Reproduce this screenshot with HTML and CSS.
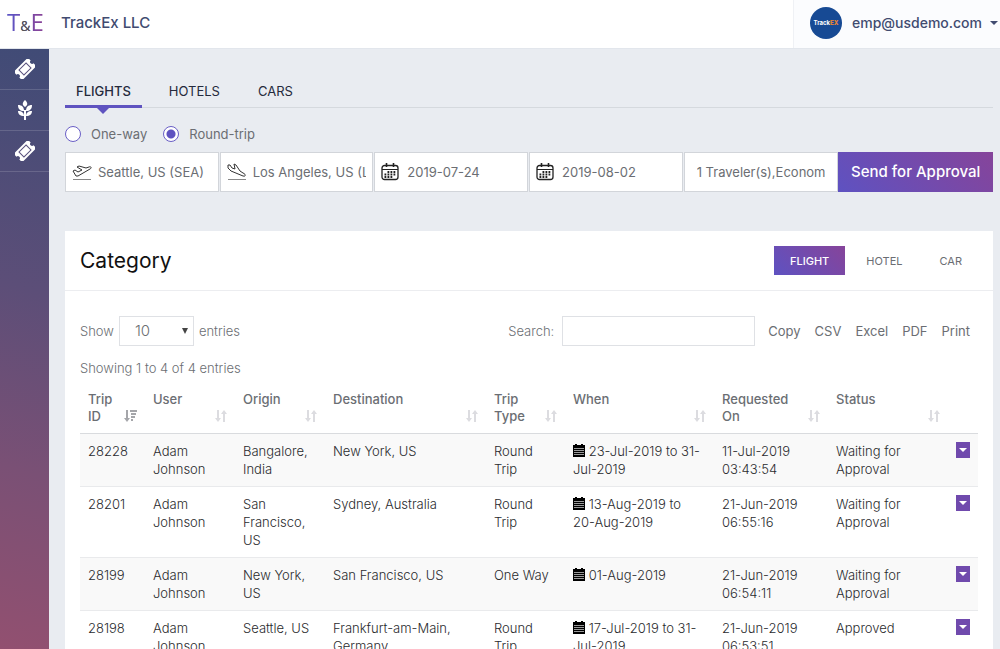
FILE: index.html
```
<!DOCTYPE html>
<html lang="en">
<head>
    <meta charset="UTF-8">
    <meta name="viewport" content="width=device-width, initial-scale=1.0">
    <title>TrackEx LLC - Flights</title>
    <link rel="stylesheet" href="styles.css">
</head>
<body>

<!-- shared icons -->
<svg class="sprite" width="0" height="0" aria-hidden="true">
    <symbol id="ticket" viewBox="0 0 20 20">
        <g transform="rotate(-45 10 10)">
            <path fill="#fff" d="M0 4h20v4a2 2 0 0 0 0 4v4H0v-4a2 2 0 0 0 0-4z"/>
            <path fill="none" stroke="#59527d" d="M5 6.500h10v7H5z"/>
        </g>
    </symbol>
    <symbol id="leaf" viewBox="0 0 14 20">
        <path fill="#fff" d="M7 0c3 3 3 5 0 7-3-2-3-4 0-7zM0 5c4 0 6 2 6 6-4 0-6-2-6-6zM14 5c-4 0-6 2-6 6 4 0 6-2 6-6zM0 11c4 0 6 2 6 5-4 0-6-2-6-5zM14 11c-4 0-6 2-6 5 4 0 6-2 6-5zM6 10h2v10H6z"/>
    </symbol>
    <symbol id="calendar" viewBox="0 0 18 18">
        <g fill="none" stroke="#222">
            <rect x="1" y="2.500" width="16" height="14" rx="2.500" stroke-width="1.300"/>
            <path d="M1 6.500h16"/>
            <path stroke-width="1.600" d="M5.500 0v4M12.500 0v4"/>
            <path stroke-width="1.800" stroke-dasharray="1.800 1.200" d="M6.500 9h8M3.500 11.500h11M3.500 14h8"/>
        </g>
    </symbol>
    <symbol id="date" viewBox="0 0 12 13">
        <path d="M0 1h2V0h2v1h4V0h2v1h2v12H0z"/>
        <path stroke="#ddd" stroke-width=".7" d="M1 4.500h10M1 6.500h10M1 8.500h10M1 10.500h10"/>
    </symbol>
    <symbol id="sort" viewBox="0 0 12 12">
        <path d="M2 0h2v8h2l-3 4-3-4h2zM8 12h2V4h2L9 0 6 4h2z"/>
    </symbol>
    <symbol id="sort-desc" viewBox="0 0 13 12">
        <path d="M2 0h2v8h2l-3 4-3-4h2zM6 0h7v2H6zM7 3h5v2H7zM7 6h4v2H7zM7 9h2v2H7z"/>
    </symbol>
</svg>

<header class="topbar">
    <a class="logo" href="#">T<span>&amp;</span>E</a>
    <div class="company">TrackEx LLC</div>
    <button class="account" type="button">
        <span class="avatar">Track<b>EX</b></span>
        <span>emp@usdemo.com</span>
        <span class="caret"></span>
    </button>
</header>

<div class="layout">
    <nav class="sidebar">
        <a href="#" aria-label="Trips"><svg width="20" height="20"><use href="#ticket"/></svg></a>
        <a href="#" aria-label="Policies"><svg width="14" height="20"><use href="#leaf"/></svg></a>
        <a href="#" aria-label="Bookings"><svg width="20" height="20"><use href="#ticket"/></svg></a>
    </nav>

    <main class="content">
        <nav class="tabs">
            <a class="active" href="#">FLIGHTS</a>
            <a href="#">HOTELS</a>
            <a href="#">CARS</a>
        </nav>

        <form>
            <div class="trip_type">
                <input type="radio" name="trip" id="oneWay">
                <label for="oneWay">One-way</label>
                <input type="radio" name="trip" id="roundTrip" checked>
                <label for="roundTrip">Round-trip</label>
            </div>
            <div class="search_bar">
                <label class="field">
                    <svg width="20" height="18" viewBox="0 0 20 18" fill="none" stroke="#333">
                        <path d="M1 8l2-1 3 2 4-2-5-3 2-1 7 2 3-1c2-1 3 1 1 2L6 13H4z"/>
                        <path stroke="#888" d="M1 16.500h18"/>
                    </svg>
                    <input type="text" value="Seattle, US (SEA)" aria-label="From">
                </label>
                <label class="field">
                    <svg width="20" height="18" viewBox="0 0 20 18" fill="none" stroke="#333">
                        <path d="M1 2l2 0 2 3 3 1-1-5 2 1 4 6 3 2c3 1 3 4 0 3L4 8 1 5z"/>
                        <path stroke="#888" d="M1 16.500h18"/>
                    </svg>
                    <input type="text" value="Los Angeles, US (LAX)" aria-label="To">
                </label>
                <label class="field date">
                    <svg width="18" height="18"><use href="#calendar"/></svg>
                    <input type="text" value="2019-07-24" aria-label="Departure date">
                </label>
                <label class="field date">
                    <svg width="18" height="18"><use href="#calendar"/></svg>
                    <input type="text" value="2019-08-02" aria-label="Return date">
                </label>
                <label class="field travelers">
                    <input type="text" value="1 Traveler(s),Economy" aria-label="Travelers and class">
                </label>
                <button class="send" type="button">Send for Approval</button>
            </div>
        </form>

        <section class="card">
            <div class="card_head">
                <h1>Category</h1>
                <div class="pills">
                    <button class="active" type="button">FLIGHT</button>
                    <button type="button">HOTEL</button>
                    <button type="button">CAR</button>
                </div>
            </div>

            <div class="card_body">
                <div class="table_tools">
                    <label for="pageSize">Show</label>
                    <span class="select">
                        <select id="pageSize">
                            <option>10</option>
                            <option>25</option>
                            <option>50</option>
                        </select>
                    </span>
                    <span>entries</span>
                    <label class="search_label" for="search">Search:</label>
                    <input type="text" id="search">
                    <div class="exports">
                        <a href="#">Copy</a>
                        <a href="#">CSV</a>
                        <a href="#">Excel</a>
                        <a href="#">PDF</a>
                        <a href="#">Print</a>
                    </div>
                </div>
                <div class="info">Showing 1 to 4 of 4 entries</div>

                <table>
                    <colgroup>
                        <col class="col_id">
                        <col class="col_name">
                        <col class="col_name">
                        <col>
                        <col class="col_type">
                        <col class="col_when">
                        <col class="col_requested">
                        <col class="col_status">
                        <col class="col_menu">
                    </colgroup>
                    <thead>
                        <tr>
                            <th>Trip ID<svg class="sorted" width="13" height="12"><use href="#sort-desc"/></svg></th>
                            <th>User<svg width="12" height="12"><use href="#sort"/></svg></th>
                            <th>Origin<svg width="12" height="12"><use href="#sort"/></svg></th>
                            <th>Destination<svg width="12" height="12"><use href="#sort"/></svg></th>
                            <th>Trip Type<svg width="12" height="12"><use href="#sort"/></svg></th>
                            <th>When<svg width="12" height="12"><use href="#sort"/></svg></th>
                            <th>Requested<br>On<svg width="12" height="12"><use href="#sort"/></svg></th>
                            <th>Status<svg width="12" height="12"><use href="#sort"/></svg></th>
                            <th></th>
                        </tr>
                    </thead>
                    <tbody>
                        <tr>
                            <td>28228</td>
                            <td>Adam Johnson</td>
                            <td>Bangalore, India</td>
                            <td>New York, US</td>
                            <td>Round<br>Trip</td>
                            <td><svg width="12" height="13"><use href="#date"/></svg> 23-Jul-2019 to 31-<br>Jul-2019</td>
                            <td>11-Jul-2019 03:43:54</td>
                            <td>Waiting for Approval</td>
                            <td><button class="row_menu" type="button" aria-label="Actions"><span class="caret"></span></button></td>
                        </tr>
                        <tr>
                            <td>28201</td>
                            <td>Adam Johnson</td>
                            <td>San Francisco, US</td>
                            <td>Sydney, Australia</td>
                            <td>Round<br>Trip</td>
                            <td><svg width="12" height="13"><use href="#date"/></svg> 13-Aug-2019 to<br>20-Aug-2019</td>
                            <td>21-Jun-2019 06:55:16</td>
                            <td>Waiting for Approval</td>
                            <td><button class="row_menu" type="button" aria-label="Actions"><span class="caret"></span></button></td>
                        </tr>
                        <tr>
                            <td>28199</td>
                            <td>Adam Johnson</td>
                            <td>New York, US</td>
                            <td>San Francisco, US</td>
                            <td>One Way</td>
                            <td><svg width="12" height="13"><use href="#date"/></svg> 01-Aug-2019</td>
                            <td>21-Jun-2019 06:54:11</td>
                            <td>Waiting for Approval</td>
                            <td><button class="row_menu" type="button" aria-label="Actions"><span class="caret"></span></button></td>
                        </tr>
                        <tr>
                            <td>28198</td>
                            <td>Adam Johnson</td>
                            <td>Seattle, US</td>
                            <td>Frankfurt-am-Main, Germany</td>
                            <td>Round<br>Trip</td>
                            <td><svg width="12" height="13"><use href="#date"/></svg> 17-Jul-2019 to 31-<br>Jul-2019</td>
                            <td>21-Jun-2019 06:53:51</td>
                            <td>Approved</td>
                            <td><button class="row_menu" type="button" aria-label="Actions"><span class="caret"></span></button></td>
                        </tr>
                    </tbody>
                </table>
            </div>
        </section>
    </main>
</div>

</body>
</html>
```
FILE: styles.css
```
* {
    box-sizing: border-box;
}

body {
    margin: 0;
    height: 100vh;
    display: flex;
    flex-direction: column;
    overflow: hidden;
    background: #E9ECF1;
    font-family: Inter, "Liberation Sans", sans-serif;
    font-size: 13px;
    line-height: 18px;
    color: #6B6E73;
}

a {
    color: inherit;
    text-decoration: none;
}

button, input, select {
    font: inherit;
    color: inherit;
    border: 0;
    border-radius: 0;
    background: none;
    padding: 0;
    margin: 0;
}

.sprite {
    position: absolute;
}

/* Top bar */
.topbar {
    flex: none;
    display: flex;
    align-items: center;
    height: 49px;
    background: #FFFFFF;
    border-bottom: 1px solid #E2E6EC;
    color: #414B70;
}

.logo {
    width: 61px;
    padding-left: 7px;
    font-family: "Open Sans", sans-serif;
    font-size: 24px;
    line-height: 32px;
    background: linear-gradient(90deg, #5D54C4 10px, #86449A 40px);
    -webkit-background-clip: text;
    background-clip: text;
    color: transparent;
}

.logo span {
    font-size: 14px;
    color: #555555;
}

.company {
    flex: 1;
    font-size: 15px;
    font-weight: 500;
    padding-bottom: 2px;
}

.account {
    display: flex;
    align-items: center;
    gap: 8px;
    height: 48px;
    padding: 0 2px 2px 16px;
    border-left: 1px solid #EFF1F5;
    background: #FBFCFE;
    font-size: 14px;
    font-weight: 500;
}

.avatar {
    width: 32px;
    height: 32px;
    margin-right: 2px;
    border-radius: 50%;
    background: #174A94;
    color: #FFFFFF;
    font-size: 6px;
    font-weight: 700;
    line-height: 32px;
    text-align: center;
}

.avatar b {
    color: #E0813A;
}

.caret {
    display: inline-block;
    border: 4px solid transparent;
    border-top-color: currentColor;
    border-bottom: 0;
}

.layout {
    flex: 1;
    min-height: 0;
    display: flex;
}

.sidebar {
    flex: none;
    width: 49px;
    background: linear-gradient(195deg, #404B76 0%, #5C4E78 40%, #7A5075 70%, #925070 100%);
}

.sidebar a {
    display: flex;
    align-items: center;
    justify-content: center;
    height: 41px;
    border-bottom: 1px solid rgba(255, 255, 255, 0.15);
}

.content {
    flex: 1;
    min-width: 0;
    padding: 26px 7px 0 16px;
}

/* Search form */
.tabs {
    display: flex;
    gap: 16px;
    height: 33px;
    border-bottom: 1px solid #D5D9DE;
    color: #252A3C;
}

.tabs a {
    height: 33px;
    padding: 7px 11px 0;
}

.tabs .active {
    position: relative;
    border-bottom: 3px solid #5F53C0;
    font-weight: 500;
}

.tabs .active::after {
    content: "";
    position: absolute;
    top: 100%;
    left: 50%;
    margin: 3px 0 0 -6px;
    border: 6px solid transparent;
    border-top-color: #5F53C0;
    border-bottom: 0;
}

.trip_type {
    display: flex;
    align-items: center;
    height: 44px;
    padding-top: 8px;
}

.trip_type input {
    appearance: none;
    width: 16px;
    height: 16px;
    border: 1px solid #6A5FC6;
    border-radius: 50%;
    background: #FFFFFF;
}

.trip_type input:checked {
    background: radial-gradient(#5F53C0 4px, #FFFFFF 5px);
}

.trip_type label {
    margin: 0 16px 0 10px;
}

.search_bar {
    display: grid;
    grid-template-columns: repeat(6, 1fr);
}

.field {
    display: flex;
    align-items: center;
    gap: 6px;
    min-width: 0;
    height: 40px;
    margin-right: 1px;
    padding: 0 6px;
    border: 1px solid #D2D5DA;
    background: #FFFFFF;
}

.field svg {
    flex: none;
}

.field input {
    flex: 1;
    min-width: 0;
}

.date {
    gap: 8px;
}

.travelers {
    margin-right: 0;
    padding: 0 12px;
}

.send {
    background: linear-gradient(45deg, #5E52C1, #86449A);
    color: #FFFFFF;
    font-size: 15px;
    font-weight: 500;
}

/* Category card */
.card {
    margin-top: 39px;
    background: #FFFFFF;
}

.card_head {
    display: flex;
    align-items: center;
    justify-content: space-between;
    height: 60px;
    padding: 0 15px;
    border-bottom: 1px solid #ECEDF0;
}

h1 {
    margin: 0;
    font-size: 21px;
    font-weight: 400;
    line-height: 28px;
    color: #111111;
}

.pills {
    display: flex;
    gap: 5px;
}

.pills button {
    height: 29px;
    padding: 0 16px;
    font-size: 11px;
}

.pills .active {
    background: linear-gradient(45deg, #5E52C1, #86449A);
    color: #FFFFFF;
    font-weight: 500;
}

.card_body {
    padding: 25px 15px 15px;
}

.table_tools {
    display: flex;
    align-items: center;
    gap: 5px;
    font-weight: 300;
}

.select {
    position: relative;
}

.select select {
    appearance: none;
    display: block;
    width: 75px;
    height: 30px;
    padding-left: 15px;
    border: 1px solid #DFE1E5;
    font-size: 15px;
}

.select::after {
    content: "";
    position: absolute;
    top: 12px;
    right: 6px;
    border: 3px solid transparent;
    border-top: 6px solid #444444;
    border-bottom: 0;
    pointer-events: none;
}

.search_label {
    margin-left: auto;
    margin-right: 3px;
}

.table_tools input {
    width: 193px;
    height: 30px;
    padding: 0 8px;
    border: 1px solid #DFE1E5;
}

.exports {
    display: flex;
    gap: 14px;
    padding: 0 8px;
    font-weight: 400;
}

.info {
    margin: 13px 0 6px;
    font-weight: 300;
}

table {
    width: 100%;
    table-layout: fixed;
    border-collapse: separate;
    border-spacing: 0;
}

.col_id {
    width: 65px;
}

.col_name {
    width: 90px;
}

.col_type {
    width: 79px;
}

.col_when {
    width: 149px;
}

.col_requested {
    width: 114px;
}

.col_status {
    width: 120px;
}

.col_menu {
    width: 30px;
}

th, td {
    padding: 8px;
    text-align: left;
    vertical-align: top;
}

th {
    position: relative;
    padding-right: 22px;
    border-bottom: 1px solid #D9DBDE;
    font-weight: 500;
    line-height: 17px;
}

th svg {
    position: absolute;
    right: 8px;
    bottom: 11px;
    fill: #DCDCE0;
}

th .sorted {
    fill: #A5A6AA;
}

td {
    border-bottom: 1px solid #E9EAEC;
    font-weight: 300;
    color: #2A2B2E;
}

td svg {
    vertical-align: -1px;
}

tbody tr:nth-child(odd) {
    background: #F9F9F9;
}

.row_menu {
    display: flex;
    align-items: center;
    justify-content: center;
    width: 14px;
    height: 16px;
    background: #704AAD;
    color: #FFFFFF;
}
```
